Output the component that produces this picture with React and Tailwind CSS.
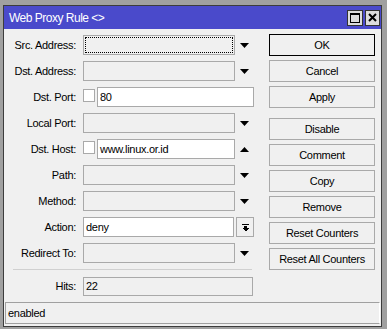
import React from 'react';

const Arrow = ({ up }) => (
  <svg width="9" height="5" viewBox="0 0 9 5">
    <path d={up ? 'M0 5H9L4.5 0Z' : 'M0 0H9L4.5 5Z'} fill="#000" />
  </svg>
);

const DownBarIcon = () => (
  <svg width="9" height="9" viewBox="0 0 9 9" shapeRendering="crispEdges">
    <rect x="1" y="1" width="7" height="1" fill="#000" />
    <rect x="3" y="3" width="3" height="2" fill="#000" />
    <path d="M1 5H8L4.5 8.5Z" fill="#000" />
  </svg>
);

const Row = ({ label, children }) => (
  <div className="flex h-[20px] items-center">
    <div className="w-[72px] text-right">{label}</div>
    <div className="ml-[7px] flex h-full items-center">{children}</div>
  </div>
);

const Combo = ({ value, active, focus, up }) => (
  <>
    <div
      className={`h-full w-[152px] border border-[#a9a9a9] ${active ? 'bg-white' : 'bg-[#f0f0f0]'} ${focus ? 'p-[1px]' : ''}`}
    >
      {focus ? (
        <div className="h-full w-full border border-dotted border-black" />
      ) : (
        <div className="pl-[2px] leading-[18px]">{value}</div>
      )}
    </div>
    <div className="flex w-[19px] justify-center">
      <Arrow up={up} />
    </div>
  </>
);

const CheckInput = ({ value, wide }) => (
  <>
    <div className="mb-[4px] h-[13px] w-[12px] border border-[#a9a9a9] bg-white" />
    <div
      className={`ml-[2px] h-full border border-[#a9a9a9] bg-white pl-[2px] leading-[18px] ${wide ? 'w-[157px]' : 'w-[138px]'}`}
    >
      {value}
    </div>
  </>
);

const Btn = ({ children, primary, className = '' }) => (
  <div
    className={`flex h-[22px] items-center justify-center border ${primary ? 'border-black' : 'border-[#a9a9a9]'} ${className}`}
  >
    {children}
  </div>
);

export default function App() {
  return (
    <div
      className="h-[329px] w-[387px] bg-[#a0a0a0] pl-[3px] pt-[5px] text-[11px] tracking-[-0.3px] text-black"
      style={{ fontFamily: '"Liberation Sans", Arial, sans-serif' }}
    >
      <div className="flex h-[322px] w-[379px] flex-col border border-[#3c3c3c] bg-[#f0f0f0]">
        {/* title bar */}
        <div className="flex h-[23px] items-center bg-[#4a4acb] pl-[5px] pr-[1px]">
          <span className="text-[12px] tracking-[-0.5px] text-white">Web Proxy Rule &lt;&gt;</span>
          <div className="ml-auto flex gap-[2px]">
            <div className="flex h-[16px] w-[16px] items-center justify-center border border-[#333] bg-[#dcdcdc]">
              <div className="h-[10px] w-[10px] border border-t-2 border-black" />
            </div>
            <div className="flex h-[16px] w-[15px] items-center justify-center border border-[#333] bg-[#dcdcdc]">
              <svg width="9" height="9" viewBox="0 0 9 9">
                <path d="M1 1L8 8M8 1L1 8" stroke="#000" strokeWidth="2" />
              </svg>
            </div>
          </div>
        </div>

        {/* body */}
        <div className="flex flex-1 flex-col pb-[1px] pt-[6px]">
          <div className="flex">
            <div className="flex flex-col gap-[6px]">
              <Row label="Src. Address:">
                <Combo focus />
              </Row>
              <Row label="Dst. Address:">
                <Combo />
              </Row>
              <Row label="Dst. Port:">
                <CheckInput value="80" wide />
              </Row>
              <Row label="Local Port:">
                <Combo />
              </Row>
              <Row label="Dst. Host:">
                <CheckInput value="www.linux.or.id" />
                <div className="flex w-[19px] justify-center">
                  <Arrow up />
                </div>
              </Row>
              <Row label="Path:">
                <Combo />
              </Row>
              <Row label="Method:">
                <Combo />
              </Row>
              <Row label="Action:">
                <div className="h-full w-[151px] border border-[#a9a9a9] bg-white pl-[2px] leading-[18px]">deny</div>
                <div className="ml-[2px] flex h-full w-[18px] items-center justify-center border border-[#a9a9a9]">
                  <DownBarIcon />
                </div>
              </Row>
              <Row label="Redirect To:">
                <Combo />
              </Row>
            </div>

            <div className="ml-auto mr-[6px] -mt-[1px] flex w-[106px] flex-col gap-[4px]">
              <Btn primary>OK</Btn>
              <Btn>Cancel</Btn>
              <Btn>Apply</Btn>
              <Btn className="mt-[6px]">Disable</Btn>
              <Btn>Comment</Btn>
              <Btn>Copy</Btn>
              <Btn>Remove</Btn>
              <Btn>Reset Counters</Btn>
              <Btn>Reset All Counters</Btn>
            </div>
          </div>

          <div className="ml-[9px] mt-[-1px] h-px w-[239px] bg-[#d0d0d0]" />

          <div className="mt-[7px] flex h-[19px] items-center">
            <div className="w-[72px] text-right">Hits:</div>
            <div className="ml-[7px] h-full w-[170px] border border-[#a9a9a9] pl-[2px] leading-[17px]">22</div>
          </div>

          <div className="mx-[1px] mt-[6px] h-[22px] border border-[#a0a0a0] border-r-white pl-[2px] leading-[20px]">
            enabled
          </div>
        </div>
      </div>
    </div>
  );
}
